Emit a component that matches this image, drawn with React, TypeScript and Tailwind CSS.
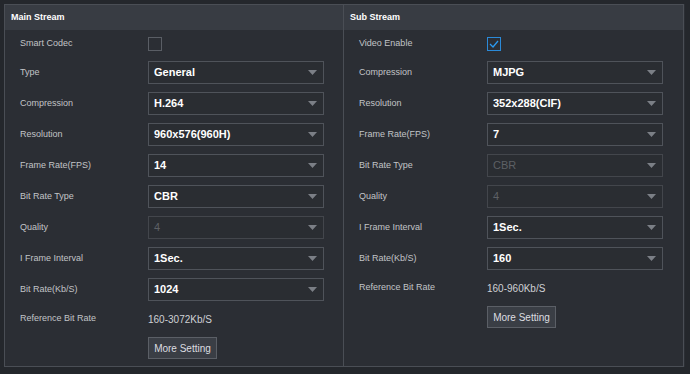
import React from 'react';

type Row =
  | { kind: 'check'; label: string; checked: boolean }
  | { kind: 'select'; label: string; value: string; disabled?: boolean };

const mainRows: Row[] = [
  { kind: 'check', label: 'Smart Codec', checked: false },
  { kind: 'select', label: 'Type', value: 'General' },
  { kind: 'select', label: 'Compression', value: 'H.264' },
  { kind: 'select', label: 'Resolution', value: '960x576(960H)' },
  { kind: 'select', label: 'Frame Rate(FPS)', value: '14' },
  { kind: 'select', label: 'Bit Rate Type', value: 'CBR' },
  { kind: 'select', label: 'Quality', value: '4', disabled: true },
  { kind: 'select', label: 'I Frame Interval', value: '1Sec.' },
  { kind: 'select', label: 'Bit Rate(Kb/S)', value: '1024' },
];

const subRows: Row[] = [
  { kind: 'check', label: 'Video Enable', checked: true },
  { kind: 'select', label: 'Compression', value: 'MJPG' },
  { kind: 'select', label: 'Resolution', value: '352x288(CIF)' },
  { kind: 'select', label: 'Frame Rate(FPS)', value: '7' },
  { kind: 'select', label: 'Bit Rate Type', value: 'CBR', disabled: true },
  { kind: 'select', label: 'Quality', value: '4', disabled: true },
  { kind: 'select', label: 'I Frame Interval', value: '1Sec.' },
  { kind: 'select', label: 'Bit Rate(Kb/S)', value: '160' },
];

const Label: React.FC<{ text: string }> = ({ text }) => (
  <div className="w-[128px] shrink-0 text-[9px] text-[#c2c4c7]">{text}</div>
);

const Select: React.FC<{ value: string; disabled?: boolean }> = ({ value, disabled }) => (
  <div
    className={`flex h-[23px] w-[176px] items-center justify-between border pl-[5px] pr-[6px] bg-[#2a2d32] ${
      disabled ? 'border-[#43464c] text-[#5d6065] font-normal' : 'border-[#4f535a] text-white font-bold'
    }`}
  >
    <span className="text-[11px] leading-none">{value}</span>
    <svg width="9" height="5" viewBox="0 0 9 5">
      <path d="M0 0 H9 L4.5 5 Z" fill="#7b7f86" />
    </svg>
  </div>
);

const Checkbox: React.FC<{ checked: boolean }> = ({ checked }) => (
  <div
    className={`flex h-[14px] w-[14px] items-center justify-center border ${
      checked ? 'border-[#2b8ad8]' : 'border-[#5a5e65]'
    }`}
  >
    {checked && (
      <svg width="10" height="8" viewBox="0 0 10 8">
        <path d="M1 4 L4 7 L9 1" fill="none" stroke="#2b9af0" strokeWidth="1.3" />
      </svg>
    )}
  </div>
);

const Panel: React.FC<{ title: string; rows: Row[]; refRate: string; className: string }> = ({
  title,
  rows,
  refRate,
  className,
}) => (
  <div className={`flex w-[340px] flex-col border-[#4a4e55] ${className}`}>
    <div className="flex h-[25px] shrink-0 items-center bg-[#383c43] pl-[6px] text-[9px] font-bold text-white">
      {title}
    </div>
    <div className="flex flex-col pl-[15px]">
      {rows.map((r) =>
        r.kind === 'check' ? (
          <div key={r.label} className="flex h-[27px] items-center">
            <Label text={r.label} />
            <Checkbox checked={r.checked} />
          </div>
        ) : (
          <div key={r.label} className="flex h-[31px] items-center">
            <Label text={r.label} />
            <Select value={r.value} disabled={r.disabled} />
          </div>
        )
      )}
      <div className="flex h-[28px] items-center">
        <Label text="Reference Bit Rate" />
        <span className="text-[10px] text-[#cfd1d4]">{refRate}</span>
      </div>
      <div className="mt-[4px] flex">
        <div className="w-[128px] shrink-0" />
        <button className="flex h-[22px] w-[69px] items-center justify-center border border-[#5b5f66] bg-[#3a3e45] text-[10px] text-[#dcdde0]">
          More Setting
        </button>
      </div>
    </div>
  </div>
);

export default function App() {
  return (
    <div
      className="h-[374px] w-[690px] bg-[#24272c] pl-[4px] pt-[4px]"
      style={{ fontFamily: '"Liberation Sans", Arial, sans-serif' }}
    >
      <div className="flex h-[363px] w-[681px] bg-[#2b2e34]">
        <Panel title="Main Stream" rows={mainRows} refRate="160-3072Kb/S" className="border" />
        <Panel title="Sub Stream" rows={subRows} refRate="160-960Kb/S" className="border border-l-0" />
      </div>
    </div>
  );
}
